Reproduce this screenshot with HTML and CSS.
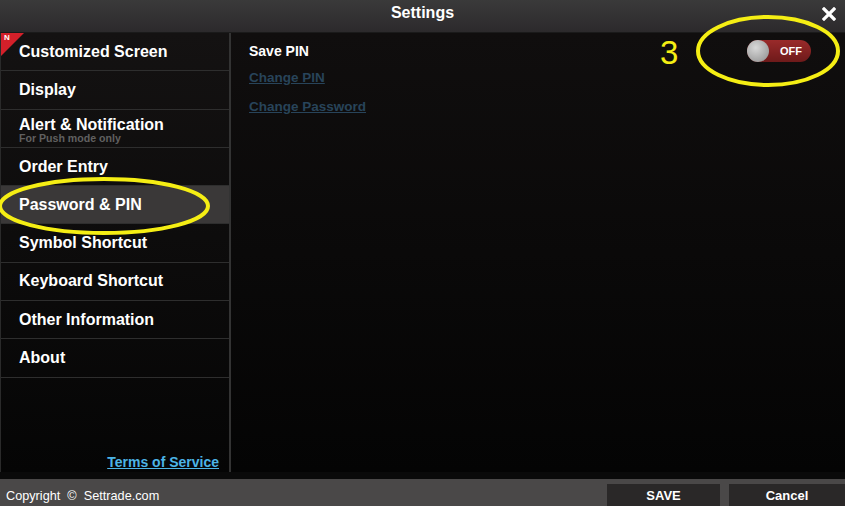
FILE: index.html
```html
<!DOCTYPE html>
<html lang="en">
<head>
    <meta charset="UTF-8">
    <meta name="viewport" content="width=device-width, initial-scale=1.0">
    <title>Settings</title>
    <link rel="stylesheet" href="styles.css">
</head>
<body>
    <div class="app">
        <header class="header">
            <span class="title">Settings</span>
            <svg class="close" width="14" height="14" viewBox="0 0 14 14">
                <path d="M2 2 L12 12 M12 2 L2 12" stroke="#fff" stroke-width="3.2" stroke-linecap="square"/>
            </svg>
        </header>

        <div class="main">
            <nav class="sidebar">
                <div class="item">
                    <span class="badge"><span>N</span></span>
                    Customized Screen
                </div>
                <div class="item">Display</div>
                <div class="item item-sub">
                    <span>Alert &amp; Notification</span>
                    <small>For Push mode only</small>
                </div>
                <div class="item">Order Entry</div>
                <div class="item active">Password &amp; PIN</div>
                <div class="item">Symbol Shortcut</div>
                <div class="item">Keyboard Shortcut</div>
                <div class="item">Other Information</div>
                <div class="item">About</div>
                <div class="spacer"></div>
                <a class="terms" href="#">Terms of Service</a>
            </nav>

            <section class="content">
                <div class="row">
                    <span class="label">Save PIN</span>
                    <div class="toggle">
                        <span class="knob"></span>
                        <span class="toggle-text">OFF</span>
                    </div>
                </div>
                <a class="link" href="#">Change PIN</a>
                <a class="link" href="#">Change Password</a>
            </section>
        </div>

        <footer class="footer">
            <span class="copyright">Copyright &nbsp;©&nbsp; Settrade.com</span>
            <div class="actions">
                <button class="btn">SAVE</button>
                <button class="btn">Cancel</button>
            </div>
        </footer>

        <!-- yellow annotation marks over the screenshot -->
        <svg class="marks" width="845" height="506" viewBox="0 0 845 506">
            <ellipse cx="104" cy="206" rx="104" ry="27" fill="none" stroke="#f5ee14" stroke-width="4"/>
            <ellipse cx="768" cy="51" rx="70" ry="34" fill="none" stroke="#f5ee14" stroke-width="4"/>
            <text x="660" y="64" class="mark-num">3</text>
        </svg>
    </div>
</body>
</html>
```

FILE: styles.css
```css
body {
    margin: 0;
    background-color: #000;
    font-family: "Liberation Sans", Arial, sans-serif;
    color: #fff;
}

.app {
    position: relative;
    width: 845px;
    height: 506px;
    display: flex;
    flex-direction: column;
    overflow: hidden;
}

.header {
    position: relative;
    height: 33px;
    flex-shrink: 0;
    display: flex;
    align-items: center;
    justify-content: center;
    background: linear-gradient(#3a3a3a, #2c2a2c);
    border-bottom: 1px solid #1a1a1a;
    box-sizing: border-box;
}

.title {
    font-size: 16px;
    font-weight: bold;
    margin-top: -6px;
}

.close {
    position: absolute;
    right: 9px;
    top: 7px;
}

.main {
    flex: 1;
    display: flex;
    background-color: #0a0a0a;
}

.sidebar {
    width: 228px;
    display: flex;
    flex-direction: column;
    border-left: 1px solid #2a2a2a;
    border-right: 2px solid #333;
    background: linear-gradient(#141212, #050505);
    margin-bottom: 7px;
}

.item {
    position: relative;
    box-sizing: border-box;
    height: 38.3px;
    flex-shrink: 0;
    display: flex;
    flex-direction: column;
    justify-content: center;
    padding-left: 18px;
    font-size: 16px;
    font-weight: bold;
    border-bottom: 1px solid #2e2e2e;
}

.item-sub {
    padding-top: 4px;
}

.item-sub span {
    line-height: 16px;
}

.item small {
    font-size: 10.6px;
    color: #606060;
    line-height: 11px;
}

.item.active {
    background-color: #3a3838;
}

.badge {
    position: absolute;
    left: 0;
    top: 0;
    width: 0;
    height: 0;
    border-top: 23px solid #d4202a;
    border-right: 23px solid transparent;
}

.badge span {
    position: absolute;
    top: -23px;
    left: 3px;
    font-size: 8px;
    font-weight: bold;
}

.spacer {
    flex: 1;
}

.terms {
    align-self: flex-end;
    margin-right: 10px;
    margin-bottom: 2px;
    color: #4cb4e6;
    font-size: 14px;
    font-weight: bold;
}

.content {
    flex: 1;
    display: flex;
    flex-direction: column;
    align-items: flex-start;
    padding: 7px 34px 0 18px;
    background: linear-gradient(#100e0e, #040404);
    margin-bottom: 7px;
}

.row {
    align-self: stretch;
    display: flex;
    justify-content: space-between;
    align-items: center;
    height: 22px;
    margin-bottom: 3px;
}

.label {
    font-size: 14px;
    font-weight: bold;
}

.toggle {
    position: relative;
    width: 64px;
    height: 22px;
    border-radius: 11px;
    background: linear-gradient(#9a2a2a, #6e1a1a);
    display: flex;
    align-items: center;
    justify-content: flex-end;
}

.knob {
    position: absolute;
    left: 0;
    top: 0;
    width: 22px;
    height: 22px;
    border-radius: 50%;
    background: radial-gradient(circle at 40% 35%, #d8d8d8, #8c8c8c);
}

.toggle-text {
    font-size: 11px;
    font-weight: bold;
    margin-right: 9px;
}

.link {
    font-size: 13.5px;
    font-weight: bold;
    color: #28445a;
    line-height: 16px;
    margin-top: 5px;
    margin-bottom: 8px;
}

.footer {
    height: 27px;
    flex-shrink: 0;
    display: flex;
    justify-content: space-between;
    align-items: flex-end;
    background-color: #4a4848;
}

.copyright {
    font-size: 12.7px;
    padding-left: 6px;
    padding-bottom: 3px;
}

.actions {
    display: flex;
    gap: 9px;
}

.btn {
    height: 22px;
    border: none;
    background-color: #2a2828;
    color: #fff;
    font-family: "Liberation Sans", Arial, sans-serif;
    font-size: 13px;
    font-weight: bold;
    padding: 0;
}

.btn:first-child {
    width: 113px;
}

.btn:last-child {
    width: 116px;
}

.marks {
    position: absolute;
    left: 0;
    top: 0;
    pointer-events: none;
}

.mark-num {
    font-family: "Liberation Sans", Arial, sans-serif;
    font-size: 33px;
    fill: #f5ee14;
}
```
